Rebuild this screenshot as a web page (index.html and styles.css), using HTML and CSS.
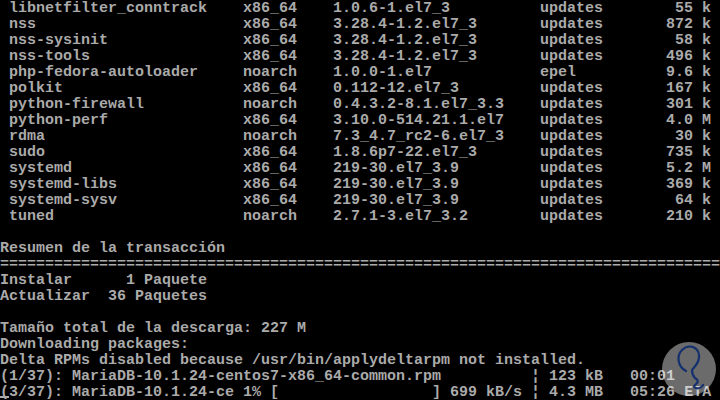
FILE: index.html
```html
<!DOCTYPE html>
<html lang="es">
<head>
<meta charset="utf-8">
<title>yum update</title>
<link rel="stylesheet" href="styles.css">
</head>
<body>
<main class="term">
<pre class="screen"> libnetfilter_conntrack    x86_64    1.0.6-1.el7_3          updates        55 k
 nss                       x86_64    3.28.4-1.2.el7_3       updates       872 k
 nss-sysinit               x86_64    3.28.4-1.2.el7_3       updates        58 k
 nss-tools                 x86_64    3.28.4-1.2.el7_3       updates       496 k
 php-fedora-autoloader     noarch    1.0.0-1.el7            epel          9.6 k
 polkit                    x86_64    0.112-12.el7_3         updates       167 k
 python-firewall           noarch    0.4.3.2-8.1.el7_3.3    updates       301 k
 python-perf               x86_64    3.10.0-514.21.1.el7    updates       4.0 M
 rdma                      noarch    7.3_4.7_rc2-6.el7_3    updates        30 k
 sudo                      x86_64    1.8.6p7-22.el7_3       updates       735 k
 systemd                   x86_64    219-30.el7_3.9         updates       5.2 M
 systemd-libs              x86_64    219-30.el7_3.9         updates       369 k
 systemd-sysv              x86_64    219-30.el7_3.9         updates        64 k
 tuned                     noarch    2.7.1-3.el7_3.2        updates       210 k

Resumen de la transacción
================================================================================
Instalar      1 Paquete
Actualizar  36 Paquetes

Tamaño total de la descarga: 227 M
Downloading packages:
Delta RPMs disabled because /usr/bin/applydeltarpm not installed.
(1/37): MariaDB-10.1.24-centos7-x86_64-common.rpm          ¦ 123 kB   00:01
<span class="cursor">(</span>3/37): MariaDB-10.1.24-ce 1% [                 ] 699 kB/s ¦ 4.3 MB   05:26 ETA</pre>
<svg class="logo" width="56" height="56" viewBox="0 0 56 56" aria-hidden="true">
  <circle cx="28" cy="28" r="27" fill="#ffffff" fill-opacity="0.42"/>
  <path d="M25 30 C17 26 15 15 21 9 C27 3 37 5 38 14 C39 22 33 26 31 29 C31 32 32 35 34 37 C37 39 38 41 35 43 C33 45 32 46 35 47 C38 48 41 46 42 44" fill="none" stroke="#14306e" stroke-width="2.2" stroke-linecap="round" stroke-linejoin="round"/>
</svg>
</main>
</body>
</html>
```
FILE: styles.css
```css
html, body {
  margin: 0;
  padding: 0;
  background: #000;
}
.term {
  position: relative;
  width: 720px;
  height: 400px;
  overflow: hidden;
  background: #000;
}
.screen {
  margin: 0;
  padding-top: 1px;
  font-family: "Liberation Mono", monospace;
  font-size: 15px;
  line-height: 16px;
  font-weight: bold;
  color: #aaaaaa;
  white-space: pre;
}
.cursor {
  position: relative;
}
.cursor::after {
  content: "";
  position: absolute;
  left: 0;
  right: 0;
  bottom: 3px;
  height: 2px;
  background: #aaaaaa;
}
.logo {
  position: absolute;
  left: 661px;
  top: 341px;
}
```
